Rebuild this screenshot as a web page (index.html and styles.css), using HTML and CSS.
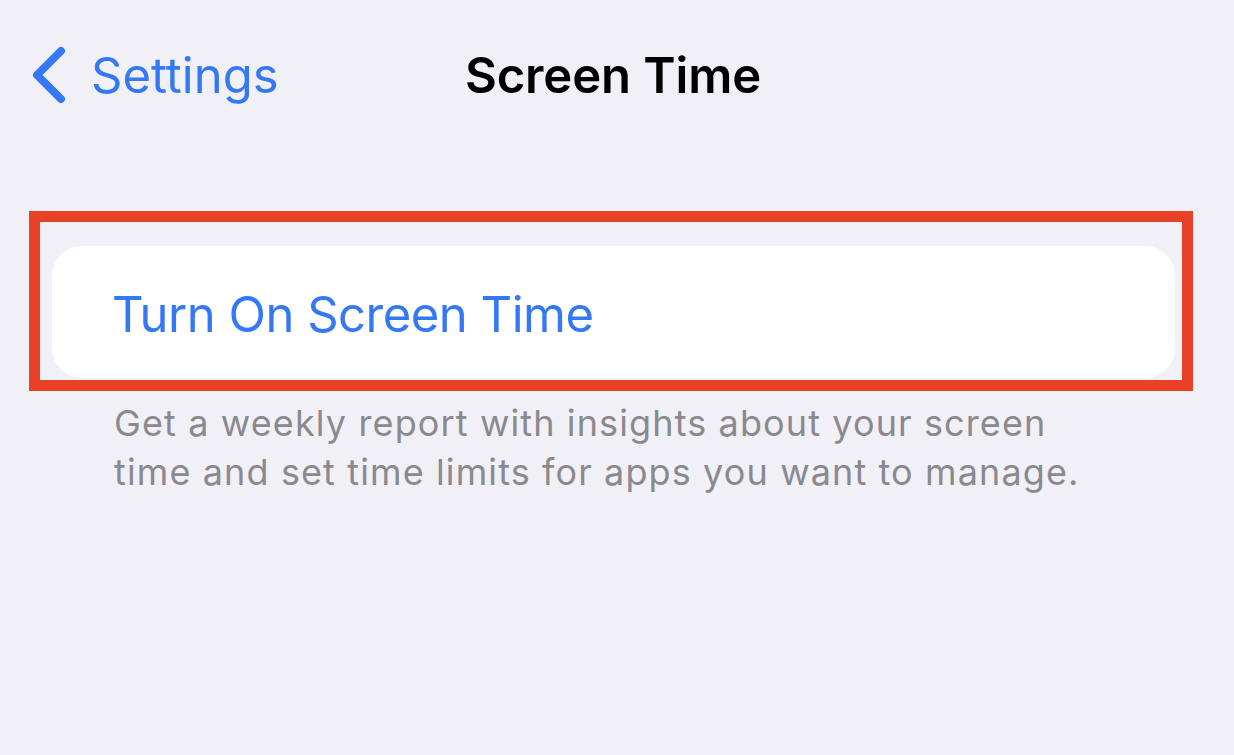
FILE: index.html
```html
<!DOCTYPE html>
<html lang="en">
  <head>
    <meta charset="UTF-8" />
    <meta name="viewport" content="width=device-width, initial-scale=1.0" />
    <title>Screen Time</title>
    <link rel="stylesheet" href="styles.css">
  </head>

  <body>
    <header class="nav">
      <a class="back" href="#">
        <svg class="chevron" width="36" height="60" viewBox="0 0 36 60">
          <path d="M31 6 L7 30 L31 54" />
        </svg>
        <span>Settings</span>
      </a>
      <h1 class="title">Screen Time</h1>
      <span></span>
    </header>

    <main>
      <div class="highlight">
        <button type="button" class="card">Turn On Screen Time</button>
      </div>
      <p class="footer">Get a weekly report with insights about your screen<br>time and set time limits for apps you want to manage.</p>
    </main>
  </body>
</html>
```

FILE: styles.css
```css
body {
  margin: 0;
  background: #f1f0f6;
  font-family: Inter, "Noto Sans", sans-serif;
  -webkit-font-smoothing: antialiased;
}

.nav {
  height: 150px;
  display: grid;
  grid-template-columns: 1fr auto 1fr;
  align-items: center;
  padding-right: 8px;
}

.back {
  display: flex;
  align-items: center;
  gap: 25px;
  padding-left: 30px;
  color: #3478f6;
  text-decoration: none;
  font-size: 49px;
  letter-spacing: 0;
}

.chevron path {
  fill: none;
  stroke: #3478f6;
  stroke-width: 8;
  stroke-linecap: round;
  stroke-linejoin: round;
}

.title {
  margin: 0;
  font-size: 49px;
  font-weight: 600;
  color: #000;
  letter-spacing: -0.1px;
}

.highlight {
  margin: 61px 41px 0 29px;
  padding: 24px 7px 2px 12px;
  border: 11px solid #e94128;
}

.card {
  display: block;
  width: 100%;
  height: 132px;
  padding: 4px 0 0 60px;
  border: 0;
  border-radius: 30px;
  background: #fff;
  text-align: left;
  font-family: inherit;
  font-size: 49px;
  color: #3478f6;
  letter-spacing: -0.5px;
}

.footer {
  margin: 8px 0 0 114px;
  font-size: 36px;
  line-height: 49px;
  color: #8a8a8e;
  letter-spacing: 1.12px;
}
```
